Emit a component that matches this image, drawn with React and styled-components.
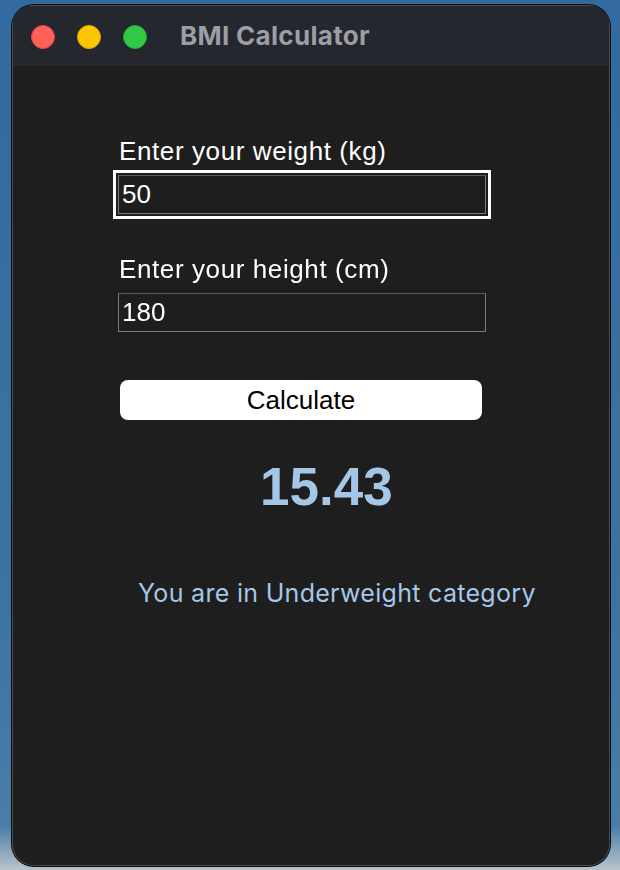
import React, { useState } from 'react';
import styled, { createGlobalStyle } from 'styled-components';

const GlobalStyle = createGlobalStyle`
  html, body {
    margin: 0;
    padding: 0;
    width: 620px;
    height: 870px;
    overflow: hidden;
  }
`;

const Colors = {
  TitleBar: '#24272d',
  Body: '#1e1e1e',
  Title: '#9c9ea4',
  Result: '#a5c7e7',
  White: '#ffffff',
};

const Desktop = styled.div`
  width: 620px;
  height: 870px;
  box-sizing: border-box;
  padding: 5px 10px 4px 12px;
  background: linear-gradient(180deg, #336a9f 0%, #3d73a3 70%, #4a7ea8 95%, #b9c4cc 100%);
`;

const Window = styled.div`
  height: 100%;
  display: flex;
  flex-direction: column;
  border-radius: 22px;
  overflow: hidden;
  background-color: ${Colors.Body};
  box-shadow: 0 0 0 1px #0b0b0b, inset 0 0 0 1px #4a4b4e;
`;

const TitleBar = styled.div`
  height: 61px;
  flex-shrink: 0;
  display: flex;
  align-items: center;
  padding-left: 19px;
  background-color: ${Colors.TitleBar};
  box-shadow: inset 0 1px 0 #4a4d53, inset 1px 0 0 #4a4b4e, inset -1px 0 0 #4a4b4e;
`;

const Lights = styled.div`
  display: flex;
  gap: 22px;
  margin-right: 33px;
  margin-top: 2px;
`;

const Light = styled.span`
  width: 24px;
  height: 24px;
  border-radius: 50%;
  box-sizing: border-box;
  background-color: ${(p) => p.$color};
  border: 1px solid ${(p) => p.$edge};
`;

const Title = styled.div`
  font-family: Inter, 'Liberation Sans', sans-serif;
  font-weight: 700;
  font-size: 26px;
  letter-spacing: 0.3px;
  color: ${Colors.Title};
`;

const Content = styled.div`
  flex: 1;
  display: flex;
  flex-direction: column;
  padding: 70px 0 0 106px;
`;

const Field = styled.div`
  display: flex;
  flex-direction: column;
  margin-bottom: ${(p) => p.$gap}px;
`;

const Label = styled.div`
  font-family: 'Liberation Sans', Arial, sans-serif;
  font-size: 26px;
  line-height: 30px;
  letter-spacing: 0.6px;
  color: ${Colors.White};
  margin-left: 1px;
`;

const Input = styled.input`
  width: 368px;
  height: 39px;
  box-sizing: border-box;
  margin: 9px 0 0 0;
  padding: 0 3px;
  border: 1px solid #7c7c7c;
  border-top-color: #5a5a5a;
  background-color: ${Colors.Body};
  color: ${Colors.White};
  font-family: 'Liberation Sans', Arial, sans-serif;
  font-size: 26px;
  outline: ${(p) => (p.$focused ? `3px solid ${Colors.White}` : 'none')};
  outline-offset: 2px;
  caret-color: ${Colors.White};
`;

const Button = styled.button`
  width: 362px;
  height: 40px;
  margin-left: 2px;
  border: none;
  border-radius: 8px;
  background-color: ${Colors.White};
  color: #000;
  font-family: 'Liberation Sans', Arial, sans-serif;
  font-size: 26px;
  padding: 0;
`;

const Bmi = styled.div`
  margin: 37px 0 0 142px;
  font-family: 'Liberation Sans', Arial, sans-serif;
  font-weight: 700;
  font-size: 53px;
  line-height: 60px;
  color: ${Colors.Result};
`;

const Message = styled.div`
  margin: 61px 0 0 20px;
  font-family: Inter, 'Liberation Sans', sans-serif;
  font-size: 25px;
  line-height: 30px;
  letter-spacing: 0.3px;
  color: ${Colors.Result};
`;

const lights = [
  { color: '#fe5f57', edge: '#e0443e' },
  { color: '#fdc602', edge: '#dea500' },
  { color: '#33c748', edge: '#1ea932' },
];

function App() {
  const [weight, setWeight] = useState('50');
  const [height, setHeight] = useState('180');

  return (
    <Desktop>
      <GlobalStyle />
      <Window>
        <TitleBar>
          <Lights>
            {lights.map((l) => (
              <Light key={l.color} $color={l.color} $edge={l.edge} />
            ))}
          </Lights>
          <Title>BMI Calculator</Title>
        </TitleBar>

        <Content>
          <Field $gap={40}>
            <Label>Enter your weight (kg)</Label>
            <Input
              $focused
              autoFocus
              value={weight}
              onChange={(e) => setWeight(e.target.value)}
            />
          </Field>
          <Field $gap={48}>
            <Label>Enter your height (cm)</Label>
            <Input value={height} onChange={(e) => setHeight(e.target.value)} />
          </Field>
          <Button>Calculate</Button>
          <Bmi>15.43</Bmi>
          <Message>You are in Underweight category</Message>
        </Content>
      </Window>
    </Desktop>
  );
}

export default App;
